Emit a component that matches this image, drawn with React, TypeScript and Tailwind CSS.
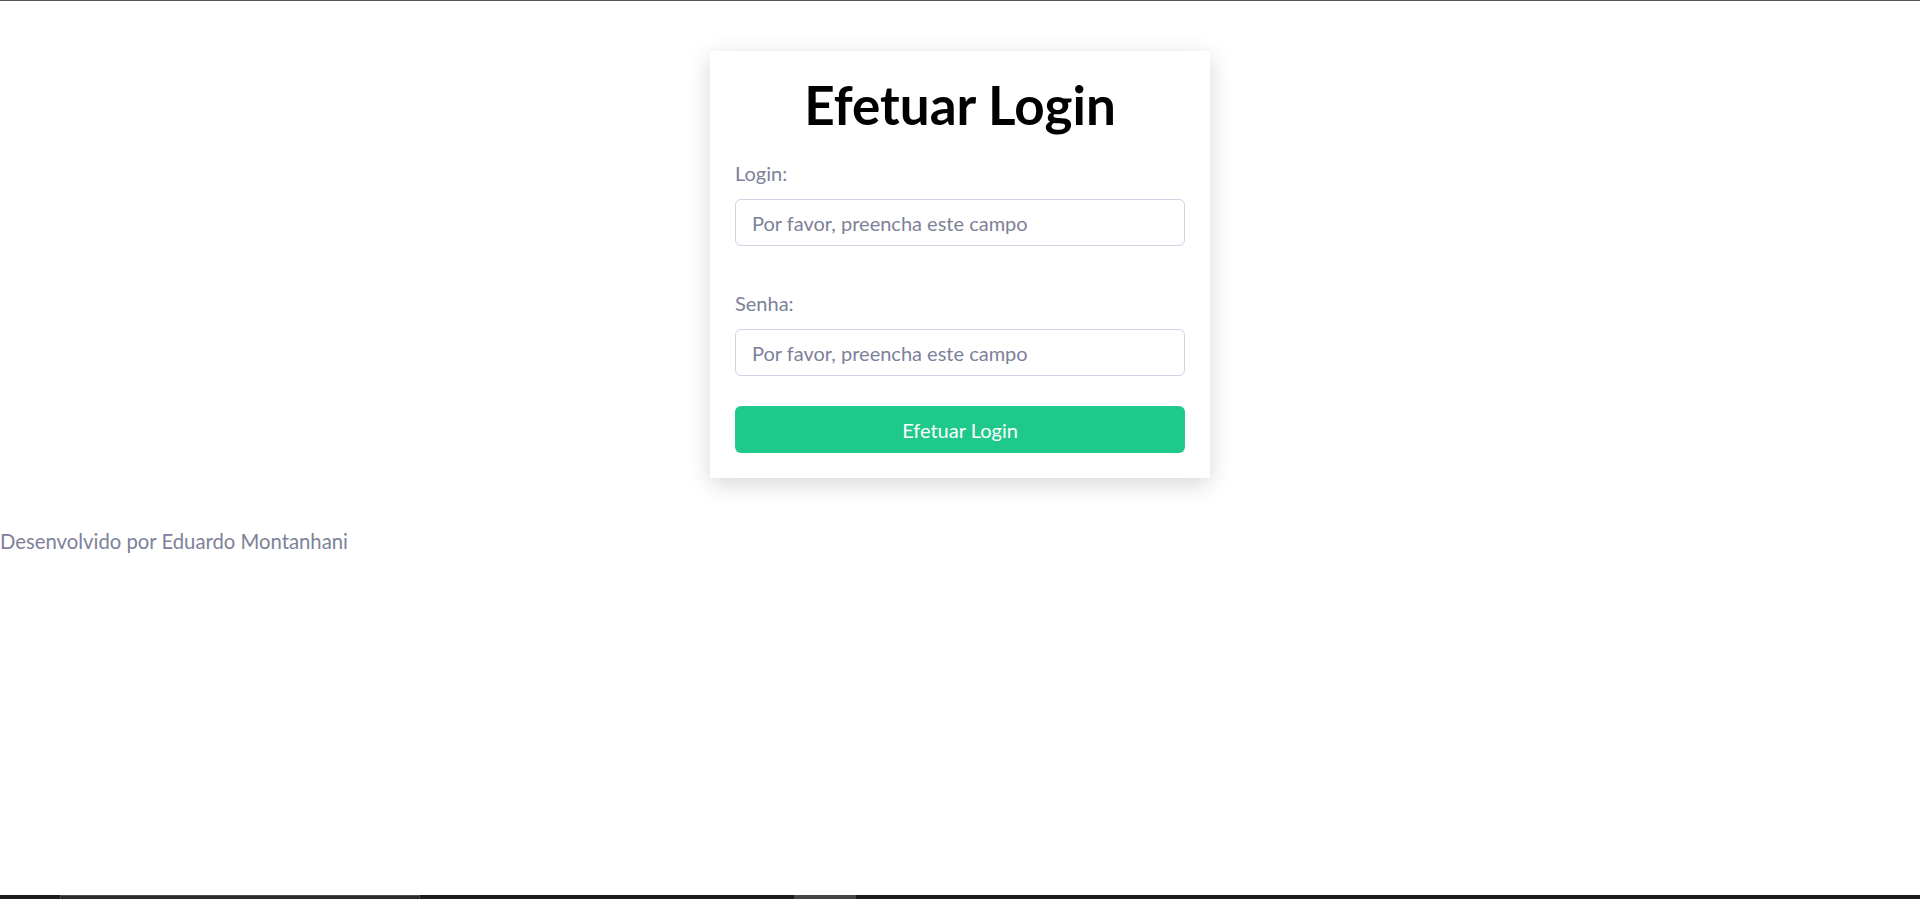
import React from 'react';

const App: React.FC = () => {
    const [login, setLogin] = React.useState('')
    const [senha, setSenha] = React.useState('')
    return (
        <div className="min-h-screen flex flex-col bg-white border-t border-[#555555]" style={{ fontFamily: 'Lato, "Noto Sans", sans-serif' }}>
            <div className="w-full flex justify-center pt-[50px]">
                <div className="w-[500px] bg-white px-[25px] pt-[20px] pb-[25px] shadow-[0_6px_22px_rgba(0,0,0,0.16)]">
                    <h1 className="text-center text-black font-bold text-[53px] leading-[68px]">Efetuar Login</h1>
                    <div className="mt-[22px] flex flex-col">
                        <label className="text-[20px] leading-[24px] text-[#7d8199]">Login:</label>
                        <input
                            type="text"
                            value={login}
                            onChange={(e) => setLogin(e.target.value)}
                            placeholder="Por favor, preencha este campo"
                            className="mt-[14px] w-full h-[47px] px-4 text-[20px] text-[#55596e] placeholder:text-[#7d8199] border border-[#d3d3e3] rounded-md outline-none"
                        />
                    </div>
                    <div className="mt-[45px] flex flex-col">
                        <label className="text-[20px] leading-[24px] text-[#7d8199]">Senha:</label>
                        <input
                            type="password"
                            value={senha}
                            onChange={(e) => setSenha(e.target.value)}
                            placeholder="Por favor, preencha este campo"
                            className="mt-[14px] w-full h-[47px] px-4 text-[20px] text-[#55596e] placeholder:text-[#7d8199] border border-[#d3d3e3] rounded-md outline-none"
                        />
                    </div>
                    <button className="mt-[30px] w-full h-[47px] rounded-md bg-[#1ec98b] text-white text-[20px]">Efetuar Login</button>
                </div>
            </div>
            <p className="mt-[51px] text-[20.3px] leading-[24px] text-[#7d8199]">Desenvolvido por Eduardo Montanhani</p>
            <div className="mt-auto h-[4px] w-full bg-[#1c1c1c] flex">
                <div className="ml-[60px] w-[360px] h-full bg-[#2b2b2b] border-t border-x border-[#4a4a4a]"></div>
                <div className="ml-[374px] w-[62px] h-full bg-[#444444]"></div>
            </div>
        </div>
    )
}

export default App;
